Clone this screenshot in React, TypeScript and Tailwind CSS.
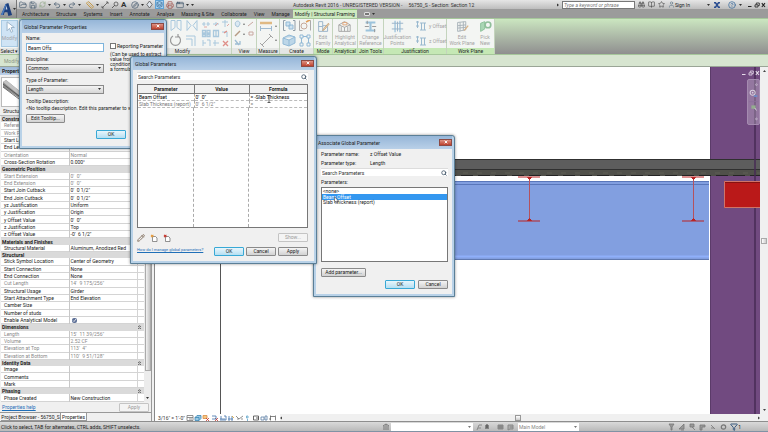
import type { ReactNode } from "react";
import {
  AppWindow,
  Binoculars,
  BookOpen,
  CircleHelp,
  Compass,
  FolderOpen,
  Funnel,
  Layers,
  Pencil,
  Printer,
  Redo2,
  RefreshCw,
  Ruler,
  Save,
  Search,
  Star,
  Undo2,
  User,
} from "lucide-react";

const tabs = [
  "Architecture",
  "Structure",
  "Systems",
  "Insert",
  "Annotate",
  "Analyze",
  "Massing & Site",
  "Collaborate",
  "View",
  "Manage",
];

type Row = { name: string; value?: string; head?: boolean; dim?: boolean; check?: boolean };

const properties: Row[] = [
  { name: "Constraints", head: true },
  { name: "Reference Level", dim: true },
  { name: "Work Plane", dim: true },
  { name: "Start Level Offset" },
  { name: "End Level Offset" },
  { name: "Orientation", value: "Normal", dim: true },
  { name: "Cross-Section Rotation", value: "0.000°" },
  { name: "Geometric Position", head: true },
  { name: "Start Extension", value: "0'  0\"", dim: true },
  { name: "End Extension", value: "0'  0\"", dim: true },
  { name: "Start Join Cutback", value: "0'  0 1/2\"" },
  { name: "End Join Cutback", value: "0'  0 1/2\"" },
  { name: "yz Justification", value: "Uniform" },
  { name: "y Justification", value: "Origin" },
  { name: "y Offset Value", value: "0'  0\"" },
  { name: "z Justification", value: "Top" },
  { name: "z Offset Value", value: "-0'  6 1/2\"" },
  { name: "Materials and Finishes", head: true },
  { name: "Structural Material", value: "Aluminum, Anodized Red" },
  { name: "Structural", head: true },
  { name: "Stick Symbol Location", value: "Center of Geometry" },
  { name: "Start Connection", value: "None" },
  { name: "End Connection", value: "None" },
  { name: "Cut Length", value: "14'  9 175/256\"", dim: true },
  { name: "Structural Usage", value: "Girder" },
  { name: "Start Attachment Type", value: "End Elevation" },
  { name: "Camber Size" },
  { name: "Number of studs" },
  { name: "Enable Analytical Model", check: true },
  { name: "Dimensions", head: true },
  { name: "Length", value: "15'  11 39/256\"", dim: true },
  { name: "Volume", value: "2.52 CF", dim: true },
  { name: "Elevation at Top", value: "113'  4\"", dim: true },
  { name: "Elevation at Bottom", value: "110'  9 51/128\"", dim: true },
  { name: "Identity Data", head: true },
  { name: "Image" },
  { name: "Comments" },
  { name: "Mark" },
  { name: "Phasing", head: true },
  { name: "Phase Created", value: "New Construction" },
];

function Caret({ className = "text-[#333]" }: { className?: string }) {
  return (
    <svg viewBox="0 0 6 4" className={`w-[3px] h-[2px] shrink-0 ${className}`}>
      <path d="M0 0h6L3 4z" fill="currentColor" />
    </svg>
  );
}

function Button({ children, primary, disabled, className = "w-[30px]" }: {
  children: ReactNode;
  primary?: boolean;
  disabled?: boolean;
  className?: string;
}) {
  return (
    <button
      disabled={disabled}
      className={`h-[9px] shrink-0 border rounded-[1px] text-center leading-[7px] ${className} ${
        primary
          ? "border-[#38a9d6] bg-linear-to-b from-[#e8f6fc] to-[#b5dff2]"
          : disabled
            ? "border-[#c4c4c4] bg-[#f4f4f4] text-[#999]"
            : "border-[#8a8a8a] bg-linear-to-b from-[#f4f4f4] to-[#d2d2d2]"
      }`}
    >
      {children}
    </button>
  );
}

function Dialog({ title, className, children }: { title: string; className: string; children: ReactNode }) {
  return (
    <section
      aria-label={title}
      className={`absolute flex flex-col rounded-t-[3px] border border-[#5b7f97] bg-[#b9d2e8] px-[2px] pb-[2px] shadow-[0_0_3px_rgba(0,0,0,0.45)] ${className}`}
    >
      <header className="h-[13px] shrink-0 flex items-center justify-between pl-[2px] bg-linear-to-b from-[#96b6d8] to-[#b9d0e8]">
        <h2>{title}</h2>
        <button
          aria-label={`Close ${title}`}
          className="w-[13px] h-[7px] mb-[1px] grid place-items-center border border-[#8c4a44] bg-linear-to-b from-[#dd9285] to-[#bd3f2c] text-white"
        >
          <svg viewBox="0 0 6 6" className="w-[4px] h-[4px]">
            <path d="M1 1l4 4M5 1L1 5" stroke="currentColor" strokeWidth="1.4" />
          </svg>
        </button>
      </header>
      <div className="flex-1 flex flex-col bg-[#f0f0f0] px-[4px]">{children}</div>
    </section>
  );
}

function Dropdown({ label, value }: { label: string; value: string }) {
  return (
    <label className="block">
      <span className="block h-[8px]">{label}</span>
      <span className="relative block">
        <select className="block w-[78px] h-[9px] appearance-none border border-[#8a8a8a] bg-linear-to-b from-[#f3f3f3] to-[#d6d6d6] pl-[1px] leading-[7px]">
          <option>{value}</option>
        </select>
        <span className="absolute top-[3px] left-[72px] flex">
          <Caret />
        </span>
      </span>
    </label>
  );
}

function SearchBox() {
  return (
    <div className="h-[8px] shrink-0 flex items-center bg-white border-t border-[#dcdcdc] pr-[1px]">
      <input
        aria-label="Search Parameters"
        placeholder="Search Parameters"
        className="flex-1 min-w-0 h-[7px] pl-[1px] placeholder:text-[#333] outline-none"
      />
      <Search className="size-[6px] text-[#34495e]" strokeWidth={3} />
    </div>
  );
}

function PropertiesDialog() {
  return (
    <Dialog title="Global Parameter Properties" className="left-[19px] top-[19px] w-[148px] h-[130px]">
      <div className="flex justify-between pt-[2px]">
        <div className="flex flex-col gap-[4px]">
          <label className="block">
            <span className="block h-[8px]">Name:</span>
            <input
              defaultValue="Beam Offs"
              className="block w-[78px] h-[9px] border border-[#7eb4dc] bg-white pl-[1px] outline-none"
            />
          </label>
          <Dropdown label="Discipline:" value="Common" />
          <Dropdown label="Type of Parameter:" value="Length" />
        </div>
        <div className="w-[50px] pt-[8px]">
          <label className="flex items-center gap-[1px] whitespace-nowrap">
            <input type="checkbox" className="appearance-none size-[6px] shrink-0 border border-[#777] bg-white" />
            Reporting Parameter
          </label>
          <p className="pt-[3px] leading-[5px] whitespace-nowrap">
            (Can be used to extract
            <br />
            value from
            <br />
            condition
            <br />
            a formula)
          </p>
        </div>
      </div>
      <p className="pt-[4px] h-[11px]">Tooltip Description:</p>
      <p className="h-[9px] whitespace-nowrap">&lt;No tooltip description. Edit this parameter to write a</p>
      <Button className="w-[39px]">Edit Tooltip...</Button>
      <div className="flex justify-end pt-[7px] pr-[34px]">
        <Button primary>OK</Button>
      </div>
    </Dialog>
  );
}

function ParametersDialog() {
  return (
    <Dialog title="Global Parameters" className="left-[130px] top-[56px] w-[187px] h-[208px]">
      <div className="flex flex-col pt-[2px] pr-[2px]">
        <SearchBox />
        <div className="mt-[4px] h-[144px] border border-[#777] bg-white flex flex-col">
          <table className="w-full table-fixed border-collapse">
            <thead>
              <tr className="h-[8px] bg-[#f0f0f0] border-b border-[#777]">
                <th className="w-[56px] border-r border-[#777]">Parameter</th>
                <th className="w-[55px] border-r border-[#777]">Value</th>
                <th>Formula</th>
              </tr>
            </thead>
            <tbody>
              <tr className="h-[7px] border-b border-dashed border-[#bbb] text-black">
                <td className="pl-[1px] border-r border-dashed border-[#aaa]">Beam Offset</td>
                <td className="pl-[1px] border-r border-dashed border-[#aaa] whitespace-pre">0'  0"</td>
                <td className="pl-[1px]">= -Slab Thickness</td>
              </tr>
              <tr className="h-[7px] border-b border-dashed border-[#bbb] text-[#777]">
                <td className="pl-[1px] border-r border-dashed border-[#aaa] whitespace-nowrap">Slab Thickness (report)</td>
                <td className="pl-[1px] border-r border-dashed border-[#aaa] whitespace-pre">0'  6 1/2"</td>
                <td className="pl-[1px]">=</td>
              </tr>
            </tbody>
          </table>
          <div className="flex-1 flex">
            <div className="w-[56px] border-r border-dashed border-[#aaa]" />
            <div className="w-[55px] border-r border-dashed border-[#aaa]" />
          </div>
        </div>
        <div className="h-[19px] flex items-center gap-[5px]">
          <button aria-label="Edit parameter">
            <Pencil className="size-[8px] text-[#8a7a6a]" strokeWidth={3} />
          </button>
          <button aria-label="New parameter">
            <PageIcon tint="#e59a3c" />
          </button>
          <button aria-label="Delete parameter">
            <PageIcon tint="#c8362c" />
          </button>
          <span className="ml-auto flex">
            <Button disabled>Show...</Button>
          </span>
        </div>
        <div className="flex items-start gap-[2px]">
          <a href="#help" className="mr-auto text-[4px] underline text-[#1f6fb8] whitespace-nowrap">
            How do I manage global parameters?
          </a>
          <Button primary>OK</Button>
          <Button>Cancel</Button>
          <Button>Apply</Button>
        </div>
      </div>
    </Dialog>
  );
}

function PageIcon({ tint }: { tint: string }) {
  return (
    <svg viewBox="0 0 8 8" className="size-[8px]" fill="none">
      <path d="M2.500 2.500h3l1.500 1.500v3.500h-4.500z" stroke="#666" strokeWidth=".7" fill="#fff" />
      <path d="M1 .8l2.400 2.400M3.400 .8l-2.400 2.400" stroke={tint} strokeWidth="1.100" />
    </svg>
  );
}

function AssociateDialog() {
  return (
    <Dialog title="Associate Global Parameter" className="left-[313px] top-[135px] w-[142px] h-[162px]">
      <div className="flex flex-col pt-[1px] pl-[1px]">
        <dl className="grid grid-cols-[49px_1fr] leading-[9px]">
          <dt>Parameter name:</dt>
          <dd>z Offset Value</dd>
          <dt>Parameter type:</dt>
          <dd>Length</dd>
        </dl>
        <SearchBox />
        <p className="pt-[3px] h-[11px]">Parameters:</p>
        <ul className="h-[75px] border border-[#777] bg-white pt-[1px] leading-[5px]">
          <li className="h-[5px] pl-[1px]">&lt;none&gt;</li>
          <li className="h-[6px] pl-[1px] bg-[#3397f0] text-white leading-[6px]">Beam Offset</li>
          <li className="pl-[1px]">Slab Thickness (report)</li>
        </ul>
        <div className="pt-[6px] flex">
          <Button className="w-[45px]">Add parameter...</Button>
        </div>
        <div className="flex justify-end gap-[3px] pt-[3px]">
          <Button primary>OK</Button>
          <Button>Cancel</Button>
        </div>
      </div>
    </Dialog>
  );
}

function TitleBar() {
  const icon = "size-[8px] text-[#41566b]";
  return (
    <div className="h-[9px] flex items-center bg-linear-to-b from-[#e6e6e6] to-[#bdbdbd] overflow-hidden">
      <div className="w-[276px] shrink-0 pl-[2px] flex items-center gap-[2px]">
        <FolderOpen className={icon} />
        <Save className={icon} />
        <RefreshCw className="size-[7px] text-[#8aa37f]" />
        <Caret />
        <Undo2 className={icon} />
        <Caret />
        <Redo2 className={icon} />
        <Caret />
        <span className="pl-[3px]">
          <Ruler className="size-[8px] text-[#c59a4a]" strokeWidth={3} />
        </span>
        <Caret />
        <svg viewBox="0 0 8 8" className="size-[8px]">
          <path d="M1 7L7 1M1 5v2h2M5 1h2v2" stroke="#555" fill="none" strokeWidth=".8" />
        </svg>
        <svg viewBox="0 0 8 8" className="size-[8px]">
          <path d="M1 7l3-3" stroke="#555" strokeWidth=".9" />
          <circle cx="5" cy="3" r="2" stroke="#555" fill="none" strokeWidth=".8" />
        </svg>
        <b className="text-[8px] leading-[8px] text-[#333]">A</b>
        <span className="pl-[3px]">
          <Compass className={icon} />
        </span>
        <Caret />
        <svg viewBox="0 0 8 8" className="size-[7px]">
          <path d="M4 0l3 4-3 4-3-4z" stroke="#555" fill="#dfe6ee" strokeWidth=".9" />
        </svg>
        <span className="bg-[#a9d3f2] border border-[#5fa3d6]">
          <Layers className="size-[7px] text-[#24557f]" />
        </span>
        <Printer className="size-[8px] text-[#a0504a]" />
        <AppWindow className={icon} />
        <Caret />
        <Caret />
      </div>
      <h1 className="flex gap-[6px] whitespace-nowrap text-[#333]">
        <span>Autodesk Revit 2016 - UNREGISTERED VERSION -</span>
        <span>56750_S - Section: Section 12</span>
      </h1>
      <div className="ml-auto flex items-center gap-[3px] pr-[2px] whitespace-nowrap">
        <svg viewBox="0 0 4 6" className="w-[2px] h-[4px]">
          <path d="M0 0l4 3-4 3z" fill="#333" />
        </svg>
        <input
          aria-label="Search help"
          placeholder="Type a keyword or phrase"
          className="w-[73px] h-[8px] border border-[#777] bg-white pl-[1px] placeholder:italic placeholder:text-[#777]"
        />
        <Binoculars className="size-[7px] text-[#444]" />
        <BookOpen className="size-[7px] text-[#444]" />
        <Star className="size-[7px] text-[#444]" />
        <a href="#signin" className="flex items-center">
          <User className="size-[7px] text-[#5a7185]" />
          Sign In
        </a>
        <span className="pl-[14px]">
          <Caret />
        </span>
        <svg viewBox="0 0 10 8" className="w-[8px] h-[6px]">
          <path d="M1 1h2l4 6h2M1 7h2l4-6h2" stroke="#2b4e91" strokeWidth="2" fill="none" />
        </svg>
        <span className="pl-[4px]">
          <CircleHelp className="size-[8px] text-[#2c6197]" />
        </span>
        <Caret />
        <span className="pl-[2px]">
          <WindowButtons className="text-[#222]" />
        </span>
      </div>
    </div>
  );
}

function WindowButtons({ className }: { className: string }) {
  return (
    <svg viewBox="0 0 19 6" className={`w-[19px] h-[6px] ${className}`} fill="none" stroke="currentColor">
      <path d="M1 4.500h3.500" strokeWidth="1" />
      <path d="M8 2.800h3v2.200h-3zM9.300 2.600v-1.600h3v2.500h-1.100" strokeWidth=".8" />
      <path d="M14.800 1.200l3.200 3.800M18 1.200l-3.200 3.800" strokeWidth="1.100" />
    </svg>
  );
}

function Panel({ label, context, className, children }: {
  label: string;
  context?: boolean;
  className: string;
  children?: ReactNode;
}) {
  return (
    <div className={`shrink-0 flex flex-col border-r border-[#c4d4bd] ${className}`}>
      <div className="flex-1 flex justify-center gap-[4px] bg-[#f3f5f3] pt-[1px]">{children}</div>
      <div className={`h-[6px] text-center whitespace-nowrap ${context ? "bg-[#c5e8b5]" : "bg-[#e4e6e4]"}`}>{label}</div>
    </div>
  );
}

// tall ribbon command, greyed out while a dialog is open
function Tool({ label, children }: { label: ReactNode; children: ReactNode }) {
  return (
    <button disabled className="flex flex-col items-center self-start leading-[6px] text-[#a3a3a3] whitespace-nowrap">
      <svg viewBox="0 0 16 16" className="size-[13px] mb-[1px]" fill="none" stroke="#9ab4ca" strokeWidth="1.200">
        {children}
      </svg>
      <span>{label}</span>
    </button>
  );
}

function Ribbon() {
  return (
    <div className="h-[37px] shrink-0 flex overflow-hidden border-t border-b border-[#a6c79b] bg-linear-to-b from-[#cbe6c0] to-[#8f8f8f]">
      <Panel label="Select ▾" className="w-[20px]">
        <div className="w-[17px] h-[27px] flex justify-center bg-[#cfe4f5] border border-[#a9cbe4]">
          <Tool label="Modify">
            <path d="M5 1v11l3-3 2 5 2-1-2-5h4z" fill="#fff" />
          </Tool>
        </div>
      </Panel>
      <div className="w-[114px] shrink-0 bg-[#f3f5f3]" />
      <Panel label="Modify" className="w-[98px]">
        <svg viewBox="134 20 98 28" className="w-[98px] h-[28px] shrink-0" fill="none" stroke="#a9c8dd" strokeWidth="1">
          <path d="M171 20.500v10l4-3v-7zM181 20.500v10l-4-3v-7zM187 20.500v10l4-5zM197 20.500v10l-4-5z" />
          <path d="M173 36a5 5 0 1 0 5 0M178 34v3h-3" stroke="#9a9a9a" strokeWidth="1.200" />
          <path d="M186 36h9v10M186 39h6v7" />
          <path d="M202 24h3.500M206.500 24h3.500M204 22v4M208 22v4M213 24h6M216 22v4" />
          <path d="M202.500 30.500h3v2.500h-3zM207 30.500h3v2.500h-3zM202.500 34.500h3v2h-3zM207 34.500h3v2h-3zM213.500 30.500h5v6h-5zM216 30.500v6" strokeWidth="1.300" />
          <path d="M203 40v6M206 43h-3M207 40h3v6M213 43h6M215 40v6M222 22h6M225 20v7M222 32h5v5" />
          <path d="M223 41l5 5M228 41l-5 5M224 33l3-2" stroke="#df8e88" strokeWidth="1.300" />
          <path d="M227 26l2-2M204 27h3M215 26l3-3" stroke="#dfa9a4" />
        </svg>
      </Panel>
      <Panel label="View" className="w-[25px]">
        <svg viewBox="232 20 25 28" className="w-[25px] h-[28px] shrink-0" fill="none" strokeWidth="1">
          <path d="M236 26c-3-5 4-7 4-2l-2 3z" stroke="#a7c4d9" fill="#dce9f3" />
          <path d="M235 36l5-5" stroke="#b59a83" strokeWidth="1.500" />
          <path d="M248 26l5-4M249 32h4v3h-4z" stroke="#c9a7a0" />
          <path d="M235 40l4 5M235 44h5v-3" stroke="#9ebdd3" strokeWidth="1.300" />
          <path d="M243 24h2l-1 1zM243 34h2l-1 1z" stroke="#777" strokeWidth=".6" />
        </svg>
      </Panel>
      <Panel label="Measure" className="w-[23px]">
        <svg viewBox="257 20 22 28" className="w-[22px] h-[28px] shrink-0" fill="none" strokeWidth="1">
          <path d="M260 23h12" stroke="#e0b983" strokeWidth="2.500" />
          <path d="M260.500 26v5M271.500 26v5M261 28.500h10" stroke="#9fbad0" />
          <path d="M262 45l9-9M260 43l4 4M269 34l4 4" stroke="#a5a5a5" />
          <path d="M275 26h2l-1 1zM275 40h2l-1 1z" stroke="#777" strokeWidth=".6" />
        </svg>
      </Panel>
      <Panel label="Create" className="w-[34px]">
        <svg viewBox="280 20 32 28" className="w-[32px] h-[28px] shrink-0" fill="none" stroke="#92b9d6" strokeWidth="1">
          <path d="M284.500 20.500h-2v10h2M292 20.500h2v10h-2" stroke="#909da8" />
          <path d="M285 22h4v4h-4zM288 25h4v4h-4z" fill="#cde2f0" />
          <path d="M298.500 20.500v10h3M309.500 30.500v-10h-3" stroke="#aaa" />
          <circle cx="303" cy="26" r="3" stroke="#c5a99a" />
          <path d="M305 22l4-2" stroke="#e2a05b" strokeWidth="1.500" />
          <path d="M282 38l6-3 6 2v6l-6 3-6-2zM282 38l6 2 6-3M288 40v6" fill="#bcd6e8" />
          <path d="M299 35h3v3h-3zM306 35h3v3h-3zM299 43h3v3h-3zM306 43h3v3h-3zM302 36.500h4M300.500 38v5M307.500 38v5" />
        </svg>
      </Panel>
      <Panel label="Mode" context className="w-[19px]">
        <Tool label={<>Edit<br />Family</>}>
          <path d="M2 2h5v12H2zM7 7h6v7H7M2 8h5" />
          <path d="M14 4l-6 7-1 2 2-1 6-7z" stroke="#c9a67c" fill="#f2e2cc" />
        </Tool>
      </Panel>
      <Panel label="Analytical" context className="w-[25px]">
        <Tool label={<>Highlight<br />Analytical</>}>
          <path d="M1 6l7-4 7 4v8H1zM1 6l7 3 7-3M8 9v5M4 8v6M12 8v6" stroke="#a9a9a9" />
          <path d="M6 3h5v3H6z" stroke="#e0a77c" />
        </Tool>
      </Panel>
      <Panel label="Join Tools" context className="w-[26px]">
        <Tool label={<>Change<br />Reference</>}>
          <path d="M2 3h12M2 13h12M8 3v10" strokeWidth="2.600" stroke="#9cc3dc" />
          <path d="M1 8h5M10 8h5M4 1v4M13 11v4" stroke="#999" />
        </Tool>
      </Panel>
      <Panel label="Justification" context className="w-[63px]">
        <Tool label={<>Justification<br />Points</>}>
          <path d="M5 1v14M11 1v14" stroke="#9cc3dc" strokeWidth="1.600" />
          <path d="M1 4h14M1 11h14M8 2v12" />
        </Tool>
        <div className="flex flex-col gap-[3px] text-[#a3a3a3] whitespace-nowrap">
          {["y Offset", "z Offset"].map((name) => (
            <button key={name} disabled className="flex items-center gap-[2px]">
              <svg viewBox="0 0 12 12" className="size-[12px]" fill="none" stroke="#9ab9cf" strokeWidth="1">
                <path d="M1 2h3M2.500 1v7M5 3h6M5 10h6M6.500 3v7M9.500 3v7M1 6h3" />
              </svg>
              {name}
            </button>
          ))}
        </div>
      </Panel>
      <Panel label="Work Plane" context className="w-[48px]">
        <Tool label={<>Edit<br />Work Plane</>}>
          <path d="M2 3l10-1v10l-10 2zM2 7l10-1M2 10l10-1M5 3v11M9 2v11" stroke="#aab4ba" />
          <path d="M15 7l-5 6" stroke="#d8b48a" strokeWidth="1.600" />
        </Tool>
        <Tool label={<>Pick<br />New</>}>
          <path d="M2 4l5-2v9l-5 3z" fill="#aad6b5" stroke="#8ec29b" />
          <circle cx="11" cy="6" r="3.500" stroke="#8fbf9a" strokeWidth="2" />
        </Tool>
      </Panel>
    </div>
  );
}

function PropertiesPalette() {
  return (
    <aside className="w-[152px] shrink-0 flex flex-col bg-[#f0f0f0] border-r border-[#999]">
      <h2 className="h-[8px] shrink-0 pl-[2px] font-bold leading-[8px] bg-linear-to-b from-[#9db8d8] to-[#bcd0e8]">Properties</h2>
      <div className="h-[30px] shrink-0 mt-[2px] mx-[1px] border border-[#bbb] bg-white">
        <svg viewBox="0 0 20 28" className="w-[20px] h-[28px]">
          <path d="M1 4l3-2 16 13v4l-3 1L1 9z" fill="#8b8b8b" />
          <path d="M1 4l3-2 16 13-3 2z" fill="#c2c2c2" />
          <path d="M1 6l16 12M1 9l16 12 3-2" stroke="#4d4d4d" strokeWidth=".8" fill="none" />
        </svg>
      </div>
      <div className="h-[9px] shrink-0 pl-[3px] leading-[8px] border-b border-[#bbb]">Structural</div>
      <div className="flex-1 min-h-0 flex pl-[1px]">
        <table className="flex-1 h-full table-fixed border-collapse bg-white leading-[6px]">
          <colgroup>
            <col className="w-[68px]" />
            <col className="w-[68px]" />
            <col />
          </colgroup>
          <tbody>
            {properties.map((row) =>
              row.head ? (
                <tr key={row.name} className="bg-[#dadada] text-[#222]">
                  <th colSpan={2} className="text-left font-bold pl-[1px]">{row.name}</th>
                  <td className="text-center">
                    <svg viewBox="0 0 4 6" className="w-[3px] h-[4px] ml-[1px]" stroke="#222" fill="none">
                      <path d="M0 3l2-2 2 2M0 6l2-2 2 2" />
                    </svg>
                  </td>
                </tr>
              ) : (
                <tr key={row.name} className={`border-b border-[#d4d4d4] ${row.dim ? "text-[#888]" : "text-[#1a1a1a]"}`}>
                  <td className="pl-[3px] whitespace-nowrap border-r border-[#c8c8c8]">{row.name}</td>
                  <td className="pl-[1px] whitespace-pre border-r border-[#d4d4d4]">
                    {row.check ? (
                      <span className="flex pl-[1px]">
                        <input
                          type="checkbox"
                          aria-label={row.name}
                          defaultChecked
                          className="size-[5px] accent-[#5d6f96]"
                        />
                      </span>
                    ) : (
                      row.value
                    )}
                  </td>
                  <td />
                </tr>
              ),
            )}
          </tbody>
        </table>
        <div className="w-[7px] shrink-0 flex flex-col items-center justify-between bg-[#ececec] pb-[3px]">
          <div className="w-[6px] h-[255px] border border-[#aaa] bg-linear-to-r from-[#f2f2f2] to-[#c4c4c4]" />
          <Caret />
        </div>
      </div>
      <div className="h-[10px] shrink-0 flex items-center justify-between pl-[2px] pr-[2px]">
        <a href="#properties" className="underline text-[#1f6fb8]">Properties help</a>
        <Button disabled>Apply</Button>
      </div>
      <div className="h-[9px] shrink-0 flex border-t border-[#999] pl-[1px] text-[#222] whitespace-nowrap">
        <button className="w-[60px] border-r border-b border-[#999]">Project Browser - 56750_S</button>
        <button className="w-[26px] border-r border-b border-[#999] bg-white">Properties</button>
      </div>
    </aside>
  );
}

function ModelView() {
  return (
    <svg viewBox="155 67 605 347" preserveAspectRatio="xMaxYMin slice" className="absolute inset-0 w-full h-full">
      <rect x="155" y="67" width="605" height="347" fill="#fff" />
      <path d="M220.500 176v238" stroke="#555" />
      <rect x="710" y="67" width="50" height="347" fill="#714a80" />
      <path d="M710.500 67v347" stroke="#5b3b69" />
      <rect x="155" y="181" width="554" height="79" fill="#829fe0" />
      <path d="M155 181.500h554M155 184.500h554" stroke="#5a77ba" />
      <path d="M155 256.500h554" stroke="#8fb0fa" strokeWidth="2" />
      <path d="M155 259.500h554" stroke="#6079b0" />
      <rect x="155" y="159" width="605" height="17" fill="#5d5d5d" />
      <path d="M155 159.500h605M155 169.500h605" stroke="#303030" />
      <rect x="155" y="170" width="605" height="6" fill="#50504a" />
      <path d="M155 175.500h605" stroke="#242424" strokeDasharray="12 5" />
      <path d="M155 173h605" stroke="#5e5e54" strokeDasharray="5 9" />
      <path d="M755 67v347" stroke="#472b54" strokeWidth="2" opacity=".75" />
      <rect x="724" y="181" width="36" height="27" fill="#ba1919" />
      <path d="M760 181.500h-35.500v26H760" fill="none" stroke="#d07468" />
      <path d="M725 182.500h35" stroke="#861111" />
      {[529, 693].map((x) => (
        <g key={x} stroke="#b92424">
          <path d={`M${x - 11} 177h22M${x - 11} 221h22`} strokeWidth="1.200" />
          <path d={`M${x + 0.5} 177v44`} stroke="#b4525e" />
          <path d={`M${x - 1.5} 177.500h4l-2 2zM${x - 1.5} 220.500h4l-2-2z`} fill="#b92424" />
        </g>
      ))}
    </svg>
  );
}

function ViewControls() {
  return (
    <div className="h-[7px] shrink-0 flex items-center bg-[#f0f0f0] pr-[8px] text-[#333]">
      <div className="w-[125px] h-full shrink-0 flex items-center bg-white pl-[3px]">
        <span className="w-[27px] whitespace-nowrap">3/16" = 1'-0"</span>
        <svg viewBox="185 0 93 8" className="w-[93px] h-[8px]" fill="none" strokeWidth=".8">
          <path d="M187 1.500h6v5h-6zM187 3.500h6M189 5h3" stroke="#777" />
          <path d="M195 3.500l2-2h4v3l-2 2h-4zM195 3.500h4v3" stroke="#3b86b5" fill="#9ccbe5" />
          <path d="M203 1.500h4v3h-4z" stroke="#da8d45" fill="#f3c986" />
          <path d="M206 4l3 3M209 4l-3 3M215 4l3 3M218 4l-3 3" stroke="#c83a30" />
          <path d="M212 2h4v3h-4M220 5h5M221 2v5M224 2h2v4h-4" stroke="#3d6fa8" />
          <path d="M228 5h5M229 2v5M232 2v5" stroke="#3d6fa8" />
          <path d="M232 2l2 2" stroke="#e0a52e" />
          <path d="M236 2l3 3 4-3M237 5h2M241 5h2" stroke="#777" />
          <path d="M246.500 2h1.500v2h-1.500zM247.500 5v2" stroke="#5ea3c9" />
          <path d="M253.500 2h5v4h-5zM256 4h3" stroke="#444" />
          <path d="M261 3h3v3h-3zM265 2h2v4h-2z" stroke="#5b7fa5" />
          <path d="M270.500 1.500v5M270 2.500h5M275.500 1.500v5M269 5h2" stroke="#666" />
        </svg>
      </div>
      <svg viewBox="0 0 4 6" className="w-[2px] h-[4px]">
        <path d="M4 0L0 3l4 3z" fill="#444" />
      </svg>
      <div className="flex-1 flex pl-[233px]">
        <div className="w-[6px] h-[6px] border border-[#999] bg-linear-to-b from-white to-[#ccc]" />
      </div>
      <svg viewBox="0 0 4 6" className="w-[2px] h-[4px]">
        <path d="M0 0l4 3-4 3z" fill="#444" />
      </svg>
    </div>
  );
}

function StatusSelect({ label, value, className }: { label: string; value: string; className: string }) {
  return (
    <span className="relative flex items-center">
      <select aria-label={label} className={`h-[8px] appearance-none bg-white pl-[1px] leading-[8px] text-[#888] ${className}`}>
        <option>{value}</option>
      </select>
      <span className="absolute right-[2px] flex">
        <Caret className="text-[#777]" />
      </span>
    </span>
  );
}

function StatusBar() {
  return (
    <footer className="h-[11px] shrink-0 flex items-center border-t border-[#8e8e8e] border-b border-b-[#8092a4] bg-linear-to-b from-[#dadada] to-[#b9b9b9] text-[#222]">
      <p className="w-[382px] pl-[1px] whitespace-nowrap">
        Click to select, TAB for alternates, CTRL adds, SHIFT unselects.
      </p>
      <svg viewBox="0 0 8 8" className="size-[8px] mr-[1px]" fill="none" stroke="#777">
        <path d="M1 3l3-2 3 2M2 3v4M4 2v5M6 3v4" />
      </svg>
      <StatusSelect label="Active workset" value="" className="w-[82px]" />
      <svg viewBox="0 0 45 8" className="w-[45px] h-[8px]" fill="none" stroke="#888">
        <path d="M4 7l2-5h3M5 5h3" />
        <path d="M13 2h2v2h-2zM12 5h4" stroke="#444" />
        <path d="M25 2h5v4h-5zM25 4h5" fill="#888" />
        <path d="M35 2h5v4h-3l-2 1zM37 4h3" fill="#aaa" />
      </svg>
      <StatusSelect label="Design option" value="Main Model" className="w-[61px]" />
      <div className="ml-auto pr-[27px] flex items-center">
        <svg viewBox="0 0 62 8" className="w-[62px] h-[8px]" fill="#999" stroke="#777" strokeWidth=".8">
          <path d="M1 1h5L4 4v3H3V4z" />
          <path d="M11 6l5-5v5zM13 7h3" />
          <path d="M22 1h4v3h-4zM24 4l3 3" />
          <path d="M32 2h5v2h-3v3h-2z" />
          <path d="M43 2l4 4M43 5h3" fill="none" />
          <circle cx="55.500" cy="4" r="2.200" fill="none" strokeWidth="1.200" />
        </svg>
        <Funnel className="size-[8px] text-[#3c5c80]" strokeWidth={3} />
        <span>1</span>
      </div>
    </footer>
  );
}

export default function App() {
  return (
    <div className="relative h-screen flex flex-col overflow-hidden bg-[#f0f0f0] font-['Roboto','Liberation_Sans',sans-serif] text-[5px] leading-[6px] text-[#222]">
      <div className="flex shrink-0">
        <button aria-label="Application menu" className="w-[17px] h-[18px] shrink-0 flex items-center bg-linear-to-b from-[#d8d8d8] to-[#8d8d8d] border-r border-[#777]">
          <svg viewBox="0 0 14 16" className="w-[13px] h-[15px]">
            <path d="M1 14L6 2l3-1 4 13-4 1-1-4H5l-1 3z" fill="#1d3f7c" />
            <path d="M6 8l1-4 1 4z" fill="#c9d6ea" />
            <path d="M1 14L6 2l1 1-4 11z" fill="#4c7cc0" />
          </svg>
          <Caret />
        </button>
        <div className="flex-1 min-w-0">
          <TitleBar />
          <nav className="h-[9px] flex items-center gap-[7px] bg-[#9b9b9b] pl-[5px] whitespace-nowrap">
            {tabs.map((tab) => (
              <a key={tab} href="#tab">{tab}</a>
            ))}
            <a href="#modify" className="-ml-[4px] h-[9px] leading-[9px] px-[2px] bg-[#cdeabf] border-t border-[#8fcb77]">
              Modify | Structural Framing
            </a>
            <span className="flex items-center gap-[2px]">
              <span className="w-[6px] h-[4px] rounded-[1px] border border-[#ddd] bg-[#777]" />
              <Caret />
            </span>
          </nav>
        </div>
      </div>
      <Ribbon />
      <div className="h-[12px] shrink-0 bg-[#d7e5d0] border-b border-[#9aa596] pl-[4px] leading-[12px] text-[#8a9584]">
        Modify
      </div>

      <main className="flex-1 min-h-0 flex">
        <PropertiesPalette />
        <div className="flex-1 min-w-0 ml-[2px] flex flex-col border-l border-[#888]">
          <div className="flex-1 min-h-0 flex">
            <div className="flex-1 relative overflow-hidden">
              <ModelView />
              <div className="absolute top-[3px] right-0 flex">
                <WindowButtons className="text-[#e6dcea]" />
              </div>
              <div className="absolute top-[12px] right-0 w-[13px] h-[46px] rounded-[2px] border border-[#a58bb0] bg-white/25">
                <svg viewBox="0 0 13 46" className="w-full h-full" fill="none">
                  <circle cx="5.500" cy="12" r="3" stroke="#d9d2de" strokeWidth="1.200" />
                  <circle cx="5.500" cy="12" r="1" fill="#d9d2de" />
                  <path d="M7 16h4" stroke="#6d8ecb" strokeWidth="2" />
                  <path d="M1 22.500h11" stroke="#8d6f9b" />
                  <path d="M4 27h5v4h-5z" fill="#94ae8e" />
                  <path d="M8 30l2 3" stroke="#ddd" />
                  <circle cx="10" cy="2.500" r="1" stroke="#c4b5cc" />
                  <circle cx="10" cy="43" r="1" stroke="#c4b5cc" />
                </svg>
              </div>
            </div>
            <div className="w-[8px] shrink-0 flex flex-col items-center justify-between py-[3px] bg-[#f0f0f0]">
              <Caret className="rotate-180 text-[#444]" />
              <div className="w-[6px] h-[6px] border border-[#aaa] bg-linear-to-r from-white to-[#ccc]" />
              <Caret className="text-[#444]" />
            </div>
          </div>
          <ViewControls />
        </div>
      </main>
      <StatusBar />

      <PropertiesDialog />
      <AssociateDialog />
      <ParametersDialog />

      {/* text cursor over the formula, arrow over the list */}
      <svg viewBox="0 0 4 8" className="absolute left-[267px] top-[95px] w-[4px] h-[8px]" fill="none" stroke="#222" strokeWidth=".7">
        <path d="M.5 .5h3M2 .5v7M.5 7.500h3" />
      </svg>
      <svg viewBox="0 0 6 9" className="absolute left-[334px] top-[196px] w-[5px] h-[8px]">
        <path d="M.5 .5v7l1.700-1.500 1 2.500 1-.5-1-2.300h2.300z" fill="#fff" stroke="#222" strokeWidth=".6" />
      </svg>
    </div>
  );
}
